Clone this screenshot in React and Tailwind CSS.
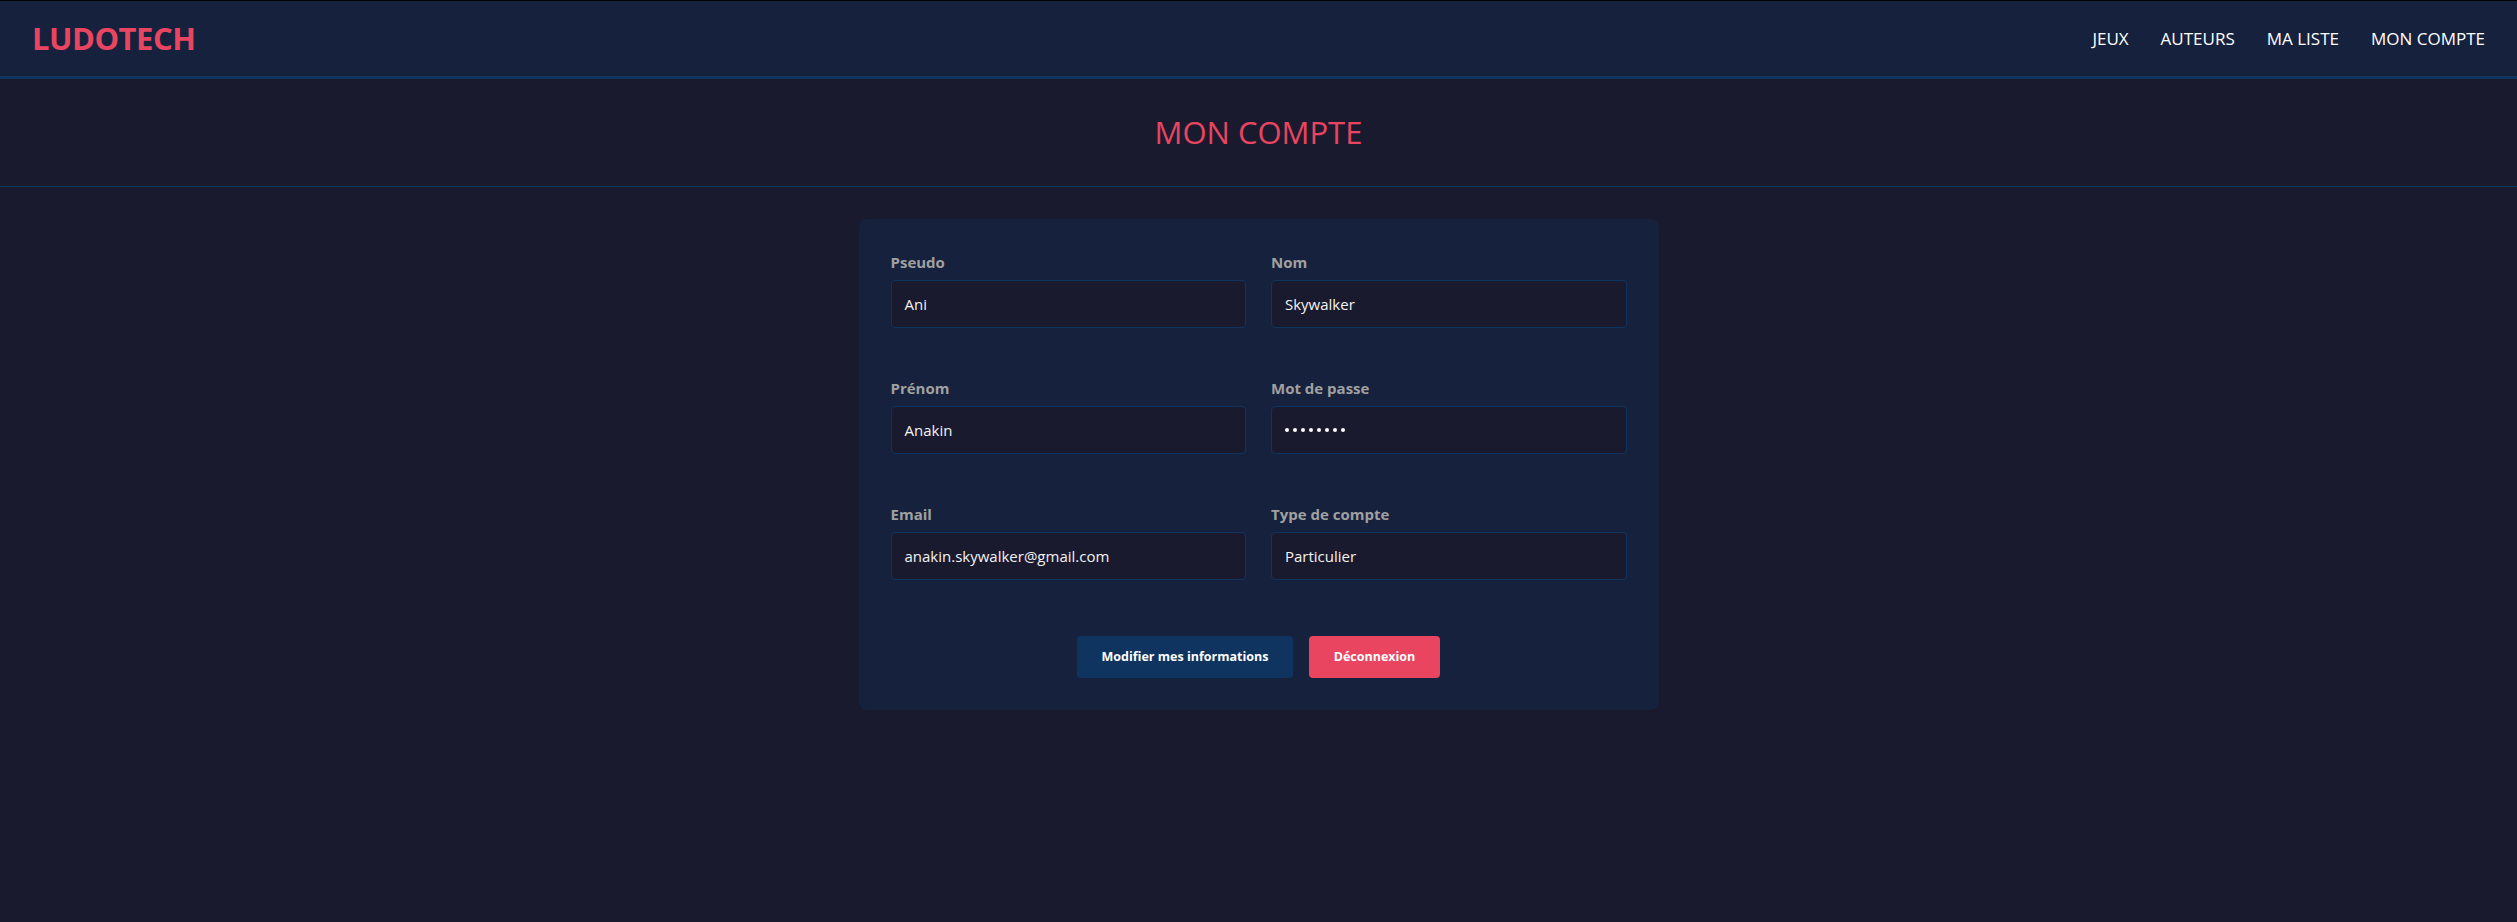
import React from "react";

const font = { fontFamily: '"Open Sans", "Noto Sans", sans-serif' };

function Field({ label, value, password }) {
  return (
    <div className="flex flex-col">
      <label className="mb-2 text-[15px] leading-5 font-bold text-[#a0a0a0]">{label}</label>
      <div className="flex h-12 items-center rounded-[4px] border border-[#0f3460] bg-[#1a1a2e] px-[13px] text-[15px] text-[#f2f2f2]">
        {password ? (
          <span className="flex gap-[4px]">
            {Array.from({ length: 8 }).map((_, i) => (
              <span key={i} className="block h-[4px] w-[4px] rounded-full bg-white" />
            ))}
          </span>
        ) : (
          value
        )}
      </div>
    </div>
  );
}

export default function App() {
  return (
    <div style={font} className="min-h-[922px] bg-[#1a1a2e] border-t border-black">
      <header className="flex h-[78px] items-center justify-between border-b-[3px] border-[#0f3460] bg-[#16213e] px-8">
        <div className="text-[31px] font-bold leading-none tracking-[-0.5px] text-[#e94560]">LUDOTECH</div>
        <nav className="flex items-center gap-8 text-[17px] text-white">
          <a>JEUX</a>
          <a>AUTEURS</a>
          <a>MA LISTE</a>
          <a>MON COMPTE</a>
        </nav>
      </header>
      <section className="flex h-[108px] items-center justify-center border-b border-[#0f3460]">
        <h1 className="text-[31px] font-normal leading-none text-[#e94560]">MON COMPTE</h1>
      </section>
      <main className="flex justify-center pt-8">
        <div className="w-[800px] rounded-lg bg-[#16213e] px-8 pt-[33px] pb-8">
          <div className="grid grid-cols-2 gap-x-[25px] gap-y-[50px]">
            <Field label="Pseudo" value="Ani" />
            <Field label="Nom" value="Skywalker" />
            <Field label="Prénom" value="Anakin" />
            <Field label="Mot de passe" password />
            <Field label="Email" value="anakin.skywalker@gmail.com" />
            <Field label="Type de compte" value="Particulier" />
          </div>
          <div className="mt-14 flex justify-center gap-4">
            <button className="h-[42px] w-[216px] rounded-[4px] bg-[#0f3460] text-[12.5px] font-bold text-white">
              Modifier mes informations
            </button>
            <button className="h-[42px] w-[131px] rounded-[4px] bg-[#e94560] text-[12.5px] font-bold text-white">
              Déconnexion
            </button>
          </div>
        </div>
      </main>
    </div>
  );
}
